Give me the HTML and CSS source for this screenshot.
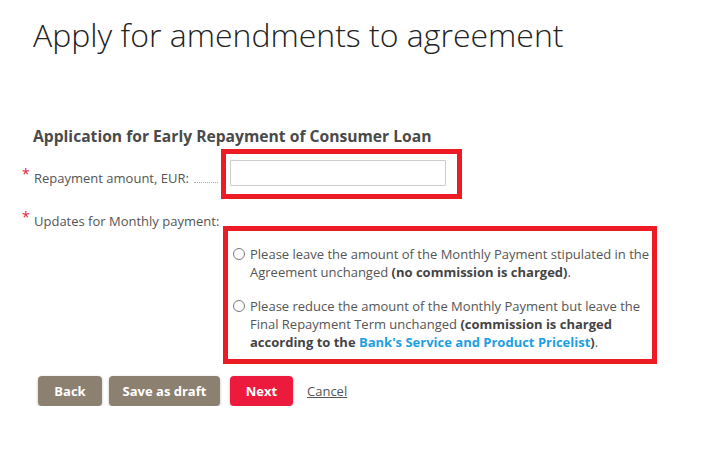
FILE: index.html
```html
<!DOCTYPE html>
<html lang="en">
<head>
<meta charset="utf-8">
<title>Apply for amendments to agreement</title>
<link rel="stylesheet" href="styles.css">
</head>
<body>
<div class="page">
  <h1 class="title">Apply for amendments to agreement</h1>
  <h2 class="subtitle">Application for Early Repayment of Consumer Loan</h2>

  <div class="row row-amount">
    <div class="label">
      <span class="req">*</span>
      <span class="label-text">Repayment amount, EUR:</span>
      <span class="leader"></span>
    </div>
    <div class="box box-amount">
      <input class="text-input" type="text">
    </div>
  </div>

  <div class="row row-updates">
    <div class="label">
      <span class="req">*</span>
      <span class="label-text">Updates for Monthly payment:</span>
    </div>
    <div class="box box-options">
      <label class="option">
        <input class="radio" type="radio" name="upd">
        <span class="option-text">Please leave the amount of the Monthly Payment stipulated in the Agreement unchanged <b>(no commission is charged)</b>.</span>
      </label>
      <label class="option">
        <input class="radio" type="radio" name="upd">
        <span class="option-text">Please reduce the amount of the Monthly Payment but leave the Final Repayment Term unchanged <b>(commission is charged according to the <a class="link" href="#">Bank's Service and Product Pricelist</a>)</b>.</span>
      </label>
    </div>
  </div>

  <div class="actions">
    <button class="btn btn-back" type="button">Back</button>
    <button class="btn btn-draft" type="button">Save as draft</button>
    <button class="btn btn-next" type="button">Next</button>
    <a class="cancel" href="#">Cancel</a>
  </div>
</div>
</body>
</html>
```

FILE: styles.css
```css
html, body {
  margin: 0;
  padding: 0;
  background: #fff;
}
body {
  font-family: "Open Sans", "Liberation Sans", sans-serif;
  color: #555;
}
.page {
  padding: 13px 0 0 22px;
}
.title {
  margin: 0 0 0 11px;
  font-size: 32px;
  font-weight: 300;
  line-height: 44px;
  color: #222;
}
.subtitle {
  margin: 69px 0 0 11px;
  font-size: 15.65px;
  font-weight: 700;
  line-height: 20px;
  color: #4a4a4a;
}
.row {
  display: flex;
  align-items: flex-start;
}
.row-amount {
  margin-top: 3px;
}
.label {
  width: 199px;
  flex: none;
  display: flex;
  align-items: baseline;
  font-size: 13px;
  line-height: 18px;
  color: #555;
}
.row-amount .label {
  padding-top: 20px;
}
.req {
  width: 12px;
  flex: none;
  color: #e8173d;
  font-size: 14px;
  position: relative;
  top: -4px;
}
.leader {
  flex: 1;
  border-bottom: 1px dotted #aaa;
  margin: 0 3px 0 5px;
}
.box {
  border: 5px solid #ed1c24;
  box-sizing: border-box;
}
.box-amount {
  width: 241px;
  height: 50px;
  padding: 6px 11px 8px 4px;
}
.text-input {
  display: block;
  width: 216px;
  height: 26px;
  box-sizing: border-box;
  border: 1px solid #ccc;
  border-radius: 1px;
  background: #fff;
  margin: 0;
  padding: 2px 6px;
  font-family: inherit;
  font-size: 13px;
}
.row-updates {
  margin-top: 13px;
}
.row-updates .label {
  width: 201px;
}
.box-options {
  margin-top: 14px;
  width: 434px;
  padding: 14px 0 8px 5px;
}
.option {
  display: flex;
  align-items: flex-start;
  font-size: 13px;
  line-height: 18px;
  color: #555;
}
.option + .option {
  margin-top: 16px;
}
.radio {
  appearance: none;
  -webkit-appearance: none;
  flex: none;
  width: 12px;
  height: 12px;
  margin: 3px 5px 0 0;
  border: 1px solid #777;
  border-radius: 50%;
  background: #fff;
}
.option-text b {
  color: #444;
  font-weight: 700;
}
.link {
  color: #1ba0e1;
  text-decoration: none;
}
.actions {
  display: flex;
  align-items: center;
  margin: 12px 0 0 16px;
}
.btn {
  height: 30px;
  border: none;
  border-radius: 4px;
  color: #fff;
  font-family: inherit;
  font-size: 13px;
  font-weight: 700;
  padding: 0;
  white-space: nowrap;
  box-shadow: 0 1px 3px rgba(0,0,0,0.25);
  cursor: pointer;
}
.btn-back {
  background: #8c8070;
  width: 64px;
}
.btn-draft {
  background: #8c8070;
  width: 111px;
  margin-left: 7px;
}
.btn-next {
  background: #ec1a3c;
  width: 63px;
  margin-left: 10px;
}
.cancel {
  margin-left: 14px;
  font-size: 13px;
  color: #555;
  text-decoration: underline;
}
```
